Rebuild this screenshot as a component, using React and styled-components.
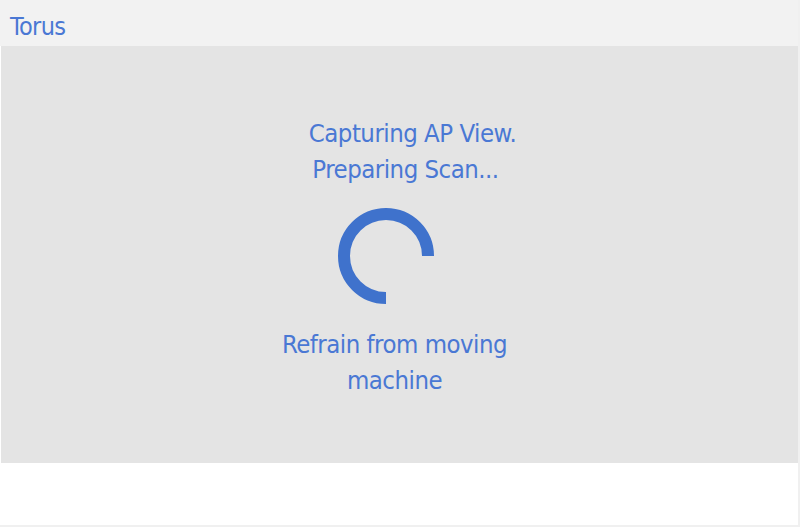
import React from "react";
import styled, { createGlobalStyle } from "styled-components";

const GlobalStyle = createGlobalStyle`
  html, body {
    margin: 0;
    padding: 0;
    background: #ffffff;
  }
  body {
    font-family: "DejaVu Sans Condensed", "Liberation Sans Narrow", Roboto, sans-serif;
  }
`;

const Frame = styled.div`
  width: 800px;
  height: 527px;
  box-sizing: border-box;
  display: flex;
  flex-direction: column;
  background: #ffffff;
  border-right: 2px solid #f0f0f0;
  border-bottom: 2px solid #f0f0f0;
`;

const Header = styled.header`
  height: 46px;
  flex: 0 0 auto;
  display: flex;
  align-items: flex-end;
  padding: 0 0 5px 10px;
  box-sizing: border-box;
  background: #f2f2f2;
`;

const Brand = styled.h1`
  margin: 0;
  font-weight: 300;
  font-size: 25px;
  letter-spacing: -0.6px;
  color: #4a78d4;
`;

const Panel = styled.main`
  height: 417px;
  margin-left: 1px;
  flex: 0 0 auto;
  display: flex;
  flex-direction: column;
  align-items: center;
  padding-top: 69px;
  box-sizing: border-box;
  background: #e4e4e4;
`;

const Message = styled.p`
  margin: 0;
  font-size: 25.5px;
  line-height: 36px;
  letter-spacing: -0.5px;
  font-weight: 300;
  color: #4a78d4;
  text-align: center;
  transform: translateX(${(p) => p.$shift || 0}px);
`;

const Line = styled.span`
  display: block;
  transform: translateX(${(p) => p.$shift || 0}px);
`;

const SpinnerBox = styled.div`
  margin: 21px 0 22px;
  width: 96px;
  height: 96px;
  transform: translateX(-14px);
`;

function Spinner() {
  return (
    <SpinnerBox>
      <svg width="96" height="96" viewBox="0 0 96 96">
        <path
          d="M48 90 A42 42 0 1 1 90 48"
          fill="none"
          stroke="#3f72cc"
          strokeWidth="12"
        />
      </svg>
    </SpinnerBox>
  );
}

export default function App() {
  return (
    <>
      <GlobalStyle />
      <Frame>
        <Header>
          <Brand>Torus</Brand>
        </Header>
        <Panel>
          <Message>
            <Line $shift={13}>Capturing AP View.</Line>
            <Line $shift={6}>Preparing Scan...</Line>
          </Message>
          <Spinner />
          <Message $shift={-5}>
            Refrain from moving
            <br />
            machine
          </Message>
        </Panel>
      </Frame>
    </>
  );
}
